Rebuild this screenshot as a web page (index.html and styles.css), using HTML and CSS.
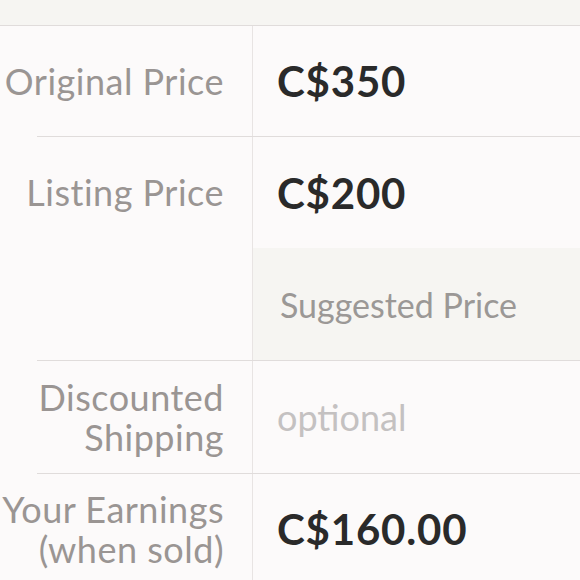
FILE: index.html
```html
<!DOCTYPE html>
<html>
<head>
<meta charset="utf-8">
<link rel="stylesheet" href="styles.css">
</head>
<body>
<div class="topband"></div>
<div class="form">
  <div class="row">
    <div class="label">Original Price</div>
    <div class="value"><span class="amount">C$350</span></div>
  </div>
  <div class="divider"></div>
  <div class="row row-tall">
    <div class="label label-top">Listing Price</div>
    <div class="value-stack">
      <div class="value"><span class="amount">C$200</span></div>
      <div class="suggest">Suggested Price</div>
    </div>
  </div>
  <div class="divider"></div>
  <div class="row row-3">
    <div class="label">Discounted<br>Shipping</div>
    <div class="value"><span class="placeholder">optional</span></div>
  </div>
  <div class="divider"></div>
  <div class="row">
    <div class="label">Your Earnings<br>(when sold)</div>
    <div class="value"><span class="amount">C$160.00</span></div>
  </div>
</div>
</body>
</html>
```

FILE: styles.css
```css
html, body {
  margin: 0;
  padding: 0;
}
body {
  width: 580px;
  height: 580px;
  overflow: hidden;
  background: #fcfafa;
  font-family: Lato, "Open Sans", sans-serif;
}
.topband {
  height: 25px;
  background: #f6f5f2;
  border-bottom: 1px solid #e0dcdb;
}
.form {
  display: flex;
  flex-direction: column;
}
.row {
  display: flex;
  height: 110px;
}
.row-tall {
  height: 223px;
}
.row-3 {
  height: 112px;
}
.label {
  width: 224px;
  padding-right: 28px;
  flex: none;
  display: flex;
  align-items: center;
  justify-content: flex-end;
  text-align: right;
  color: #9a9593;
  font-size: 36px;
  line-height: 40px;
  letter-spacing: 0.5px;
}
.label-top {
  align-items: flex-start;
  padding-top: 35px;
  height: 40px;
}
.value-stack {
  flex: 1;
  display: flex;
  flex-direction: column;
  border-left: 1px solid #e8e4e3;
}
.value-stack .value {
  border-left: none;
  height: 111px;
  flex: none;
}
.value {
  flex: 1;
  display: flex;
  align-items: center;
  padding-left: 24px;
  border-left: 1px solid #e8e4e3;
}
.amount {
  font-weight: 700;
  font-size: 42px;
  letter-spacing: 0.8px;
  color: #2a2a2a;
}
.placeholder {
  font-size: 36px;
  color: #c4c1c1;
}
.suggest {
  flex: 1;
  display: flex;
  align-items: center;
  padding-left: 27px;
  background: #f6f5f2;
  font-size: 34px;
  color: #9b9896;
}
.divider {
  height: 1px;
  margin-left: 37px;
  background: #e0dcdb;
}
```
